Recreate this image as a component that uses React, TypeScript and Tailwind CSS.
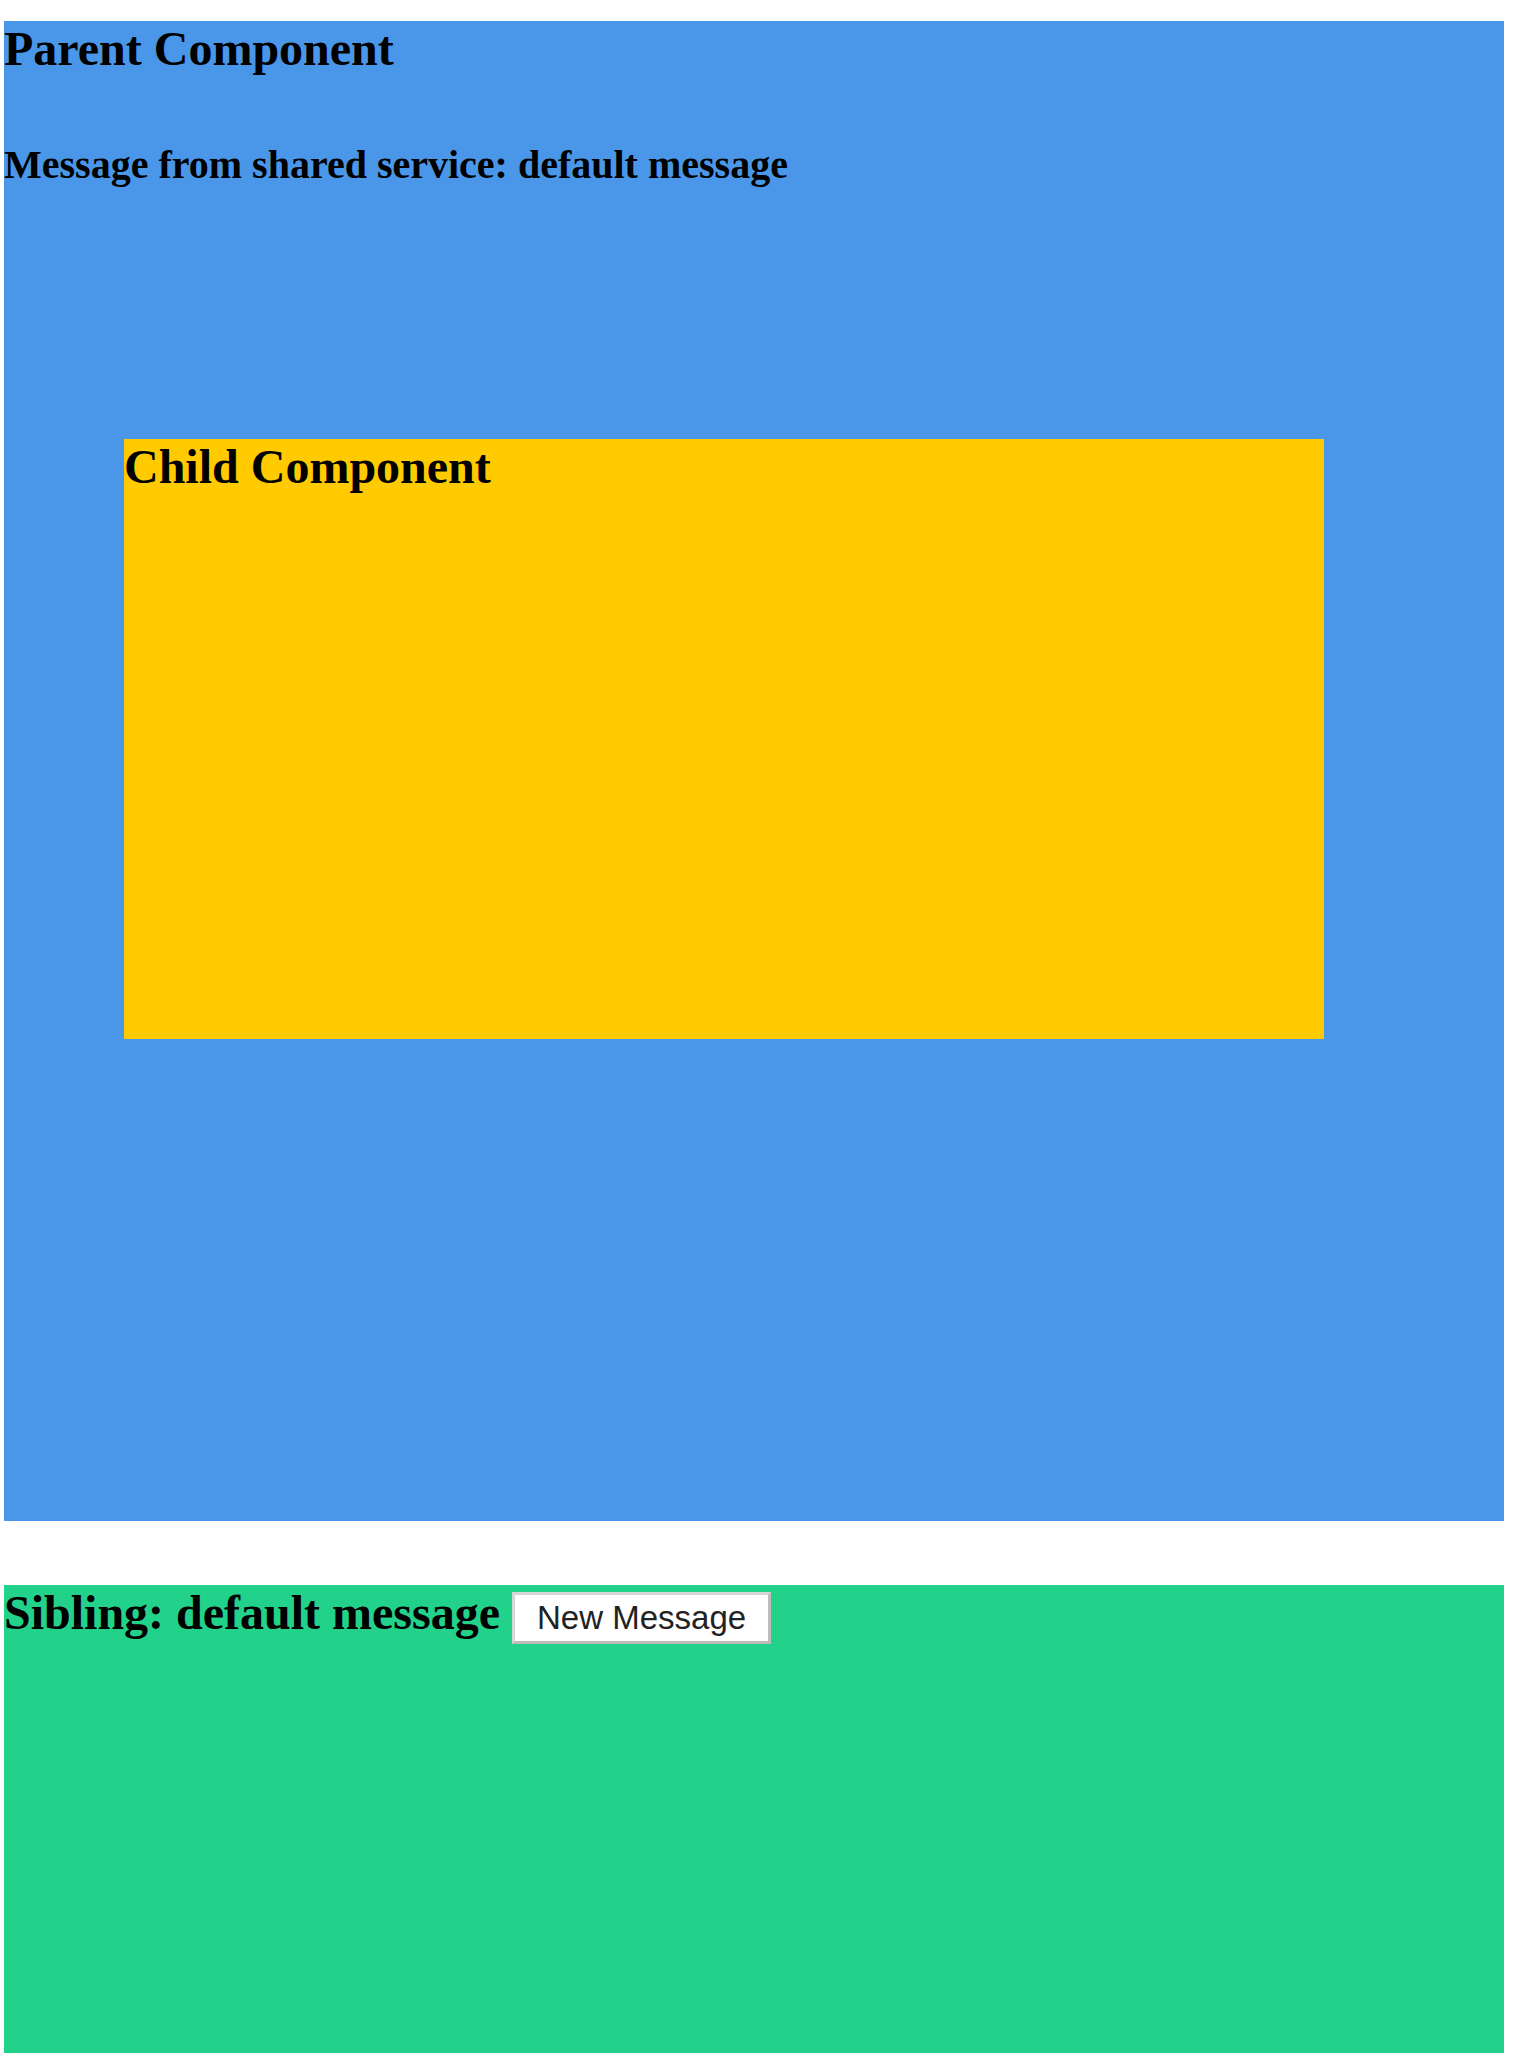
export default function App() {
  return (
    <div className="bg-white pl-[4px] pt-[21px] font-['Liberation_Serif',serif] text-black">
      {/* Parent */}
      <div className="flex h-[1500px] w-[1500px] flex-col items-start bg-[#4a97e9]">
        <h1 className="text-[48px] font-bold leading-[normal]">Parent Component</h1>
        <h2 className="mt-[65px] text-[40px] font-bold leading-[normal]">
          Message from shared service: default message
        </h2>

        {/* Child */}
        <div className="ml-[120px] mt-[251px] h-[600px] w-[1200px] bg-[#ffcb00]">
          <h1 className="text-[48px] font-bold leading-[normal]">Child Component</h1>
        </div>
      </div>

      {/* Sibling */}
      <div className="mt-[64px] h-[1500px] w-[1500px] bg-[#23d28a]">
        <h1 className="text-[48px] font-bold leading-[normal]">
          Sibling: default message{" "}
          <button className="border-[3px] border-t-[#d6d6d6] border-l-[#d6d6d6] border-b-[#bcbcbc] border-r-[#bcbcbc] bg-white px-[22px] py-[4px] align-baseline font-['Liberation_Sans',sans-serif] text-[33px] font-normal leading-[normal] text-[#222222]">
            New Message
          </button>
        </h1>
      </div>
    </div>
  );
}
